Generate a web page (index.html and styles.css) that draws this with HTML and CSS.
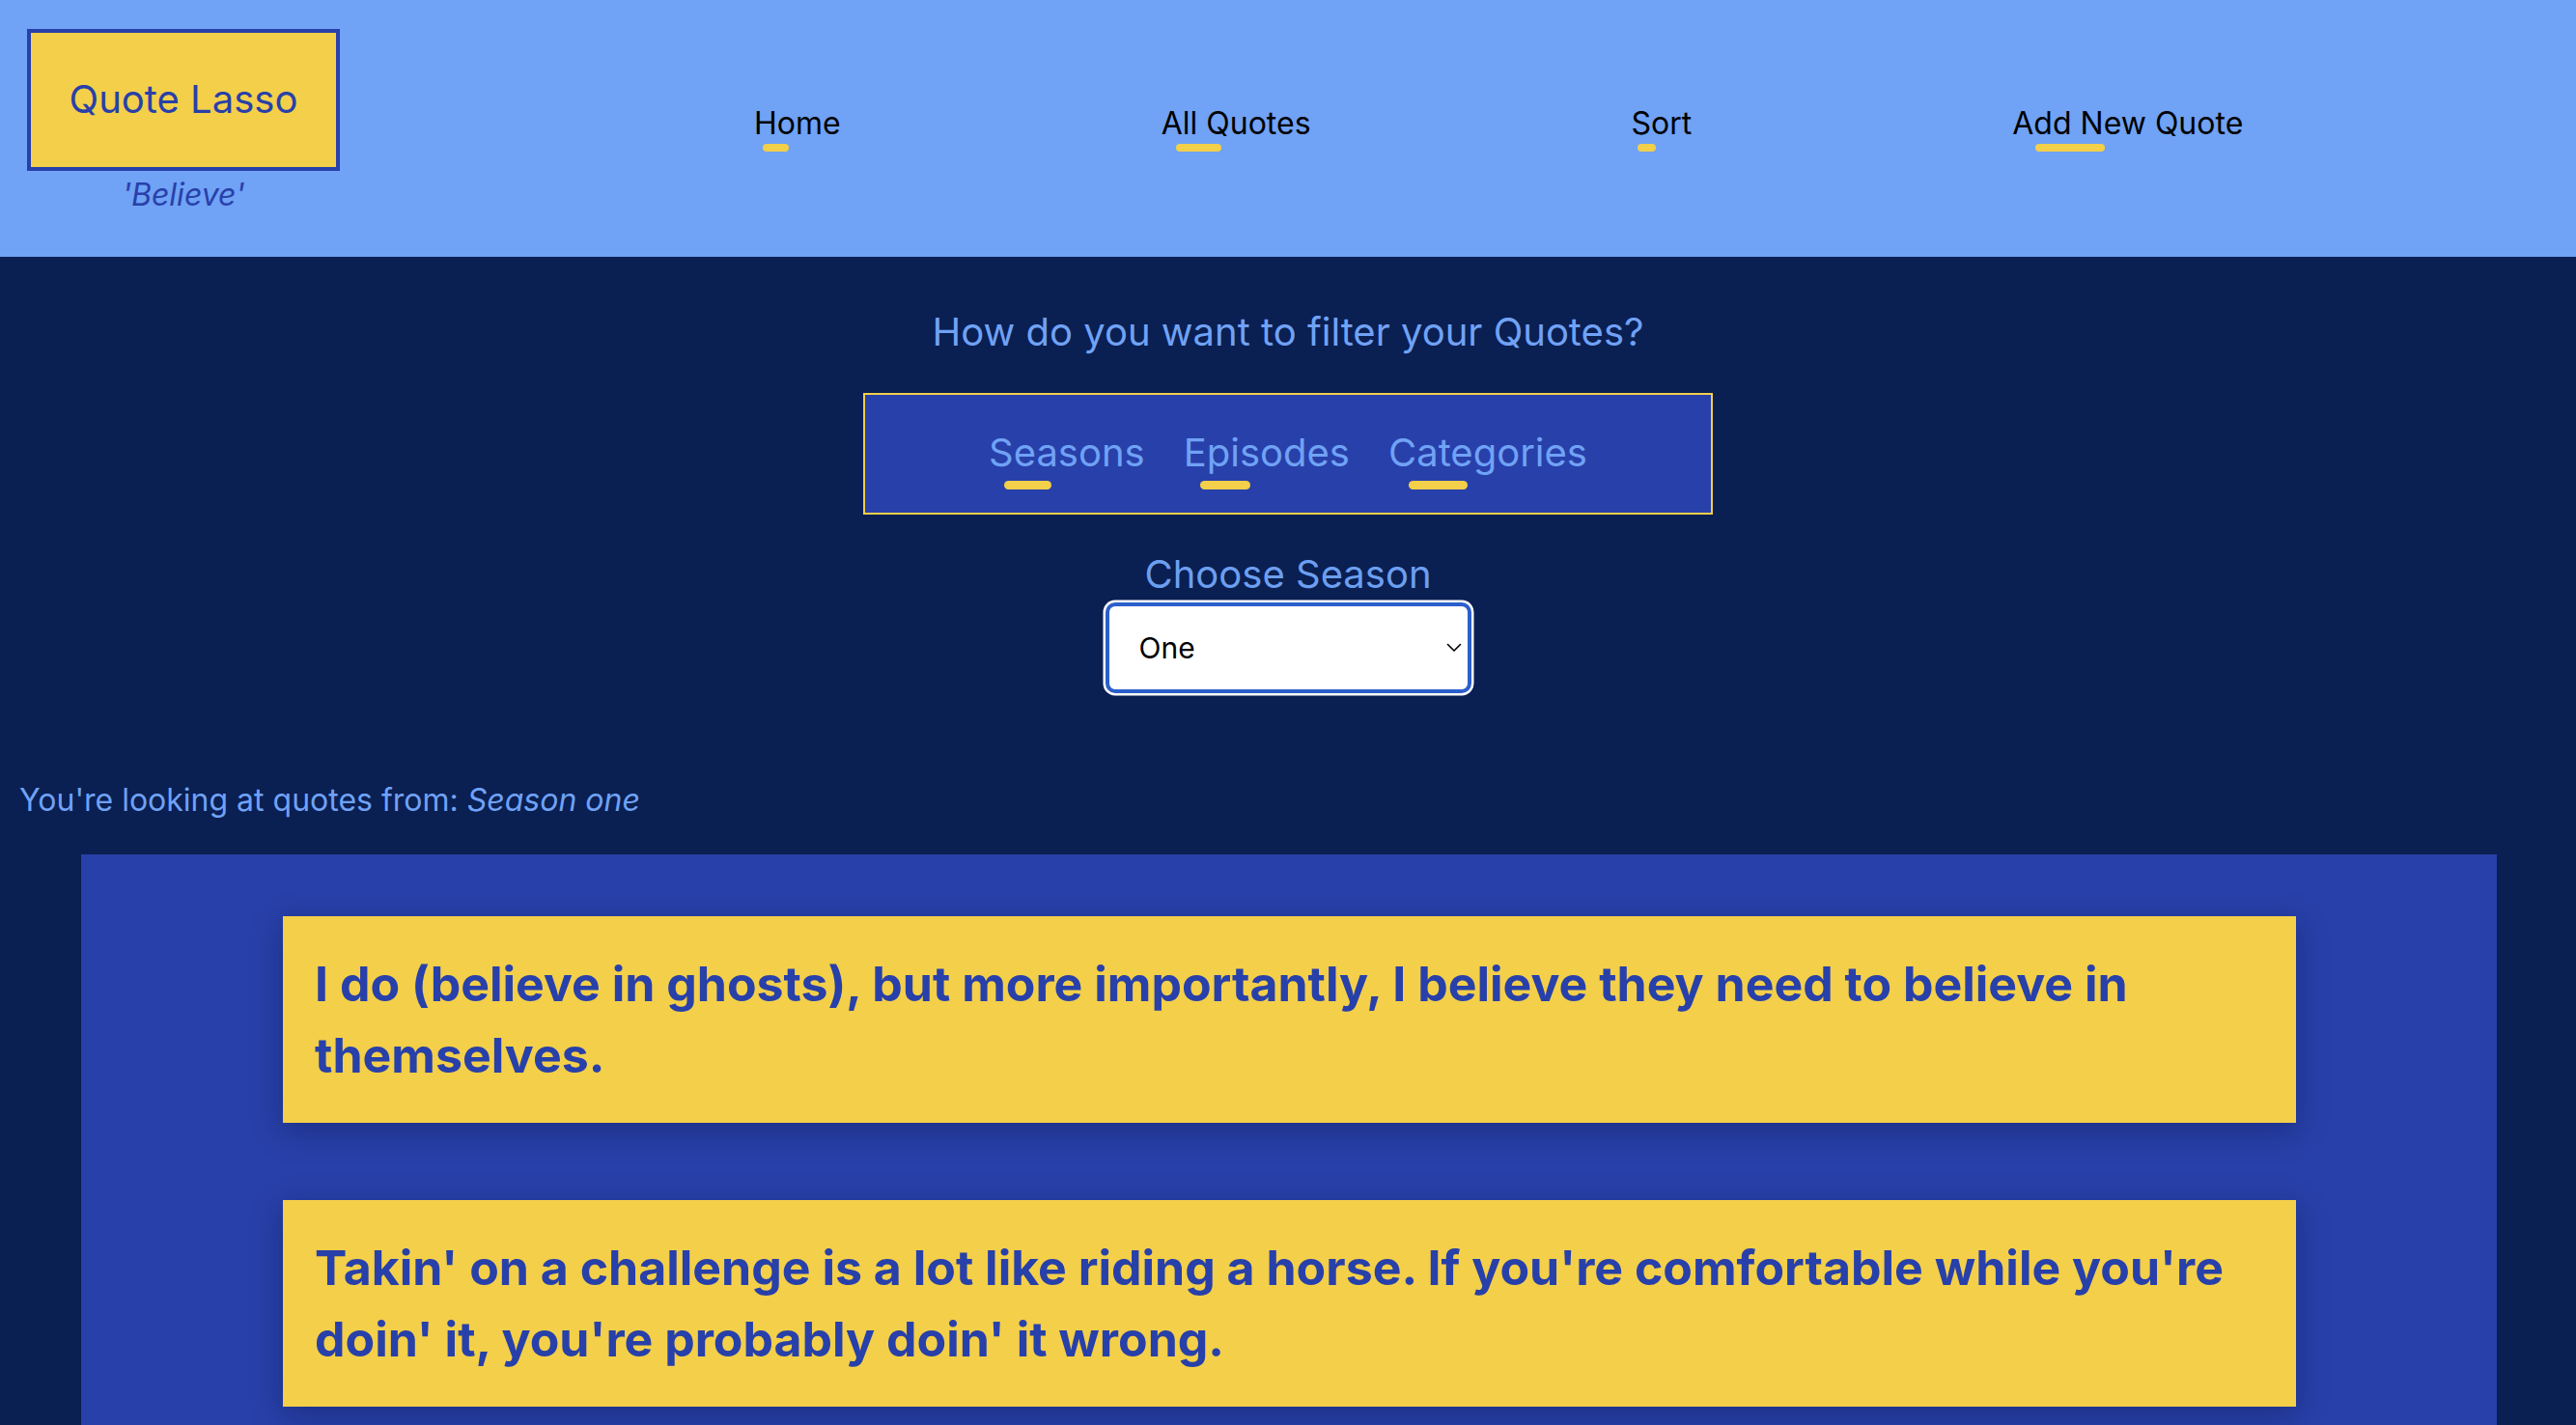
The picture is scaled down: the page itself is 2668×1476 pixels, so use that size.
FILE: index.html
```html
<!DOCTYPE html>
<html lang="en">
<head>
<meta charset="utf-8">
<title>Quote Lasso</title>
<link rel="stylesheet" href="styles.css">
</head>
<body>
<header class="header">
  <div class="brand">
    <div class="logo">Quote Lasso</div>
    <div class="motto">'Believe'</div>
  </div>
  <nav class="nav">
    <a class="nav-link" href="#">Home</a>
    <a class="nav-link" href="#">All Quotes</a>
    <a class="nav-link" href="#">Sort</a>
    <a class="nav-link" href="#">Add New Quote</a>
  </nav>
</header>
<main class="main">
  <h2 class="filter-title">How do you want to filter your Quotes?</h2>
  <div class="filter-box">
    <a class="filter-link" href="#">Seasons</a>
    <a class="filter-link" href="#">Episodes</a>
    <a class="filter-link" href="#">Categories</a>
  </div>
  <div class="chooser">
    <label class="chooser-label" for="season">Choose Season</label>
    <div class="select-wrap">
      <select id="season" class="select">
        <option>One</option>
        <option>Two</option>
        <option>Three</option>
      </select>
      <svg class="chevron" width="16" height="10" viewBox="0 0 16 10"><path d="M1.5 1.5 L8 8 L14.5 1.5" fill="none" stroke="#000" stroke-width="1.6" stroke-linecap="round" stroke-linejoin="round"/></svg>
    </div>
  </div>
  <p class="looking">You're looking at quotes from: <em>Season one</em></p>
  <section class="quotes">
    <div class="quote-card">I do (believe in ghosts), but more importantly, I believe they need to believe in themselves.</div>
    <div class="quote-card">Takin' on a challenge is a lot like riding a horse. If you're comfortable while you're doin' it, you're probably doin' it wrong.</div>
  </section>
</main>
</body>
</html>
```
FILE: styles.css
```css
* { box-sizing: border-box; }
html, body { margin: 0; padding: 0; }
body {
  font-family: Inter, "Noto Sans", "Liberation Sans", sans-serif;
  background: #0a1f52;
  min-height: 1476px;
}
.header {
  background: #70a2f5;
  height: 266px;
  display: flex;
  align-items: flex-start;
  padding: 30px 0 0 28px;
}
.brand {
  display: flex;
  flex-direction: column;
  align-items: center;
  width: 324px;
}
.logo {
  width: 324px;
  background: #f3cf4a;
  border: 4px solid #2840a9;
  color: #2840a9;
  font-size: 40px;
  line-height: 48px;
  padding: 45px 0 46px;
  text-align: center;
}
.motto {
  margin-top: 5px;
  font-size: 32px;
  line-height: 39px;
  font-style: italic;
  color: #2840a9;
}
.nav {
  display: flex;
  gap: 332px;
  margin-left: 429px;
  margin-top: 78px;
}
.nav-link, .filter-link {
  display: flex;
  flex-direction: column;
  text-decoration: none;
}
.nav-link {
  color: #000;
  font-size: 32px;
  line-height: 39px;
}
.nav-link::after, .filter-link::after {
  content: "";
  display: block;
  width: 30%;
  margin-left: 10%;
  background: #f3cf4a;
  border-radius: 5px;
}
.nav-link::after { height: 8px; margin-top: 2px; }
.main {
  display: flex;
  flex-direction: column;
  align-items: center;
}
.filter-title {
  margin: 54px 0 0;
  font-size: 40px;
  line-height: 48px;
  font-weight: 400;
  color: #70a2f5;
}
.filter-box {
  margin-top: 39px;
  width: 880px;
  height: 126px;
  background: #2840a9;
  border: 2px solid #f3cf4a;
  display: flex;
  justify-content: center;
  gap: 40px;
  padding-top: 36px;
}
.filter-link {
  color: #70a2f5;
  font-size: 40px;
  line-height: 48px;
}
.filter-link::after { height: 9px; margin-top: 5px; }
.chooser {
  margin-top: 38px;
  display: flex;
  flex-direction: column;
  align-items: center;
}
.chooser-label {
  font-size: 40px;
  line-height: 48px;
  color: #6c9ff0;
}
.select-wrap {
  position: relative;
  margin-top: 5px;
}
.select {
  appearance: none;
  -webkit-appearance: none;
  width: 379px;
  height: 94px;
  border: 4px solid #2b5fcb;
  border-radius: 10px;
  box-shadow: 0 0 0 2.5px #fff;
  background: #fff;
  color: #000;
  font-family: Inter, "Noto Sans", sans-serif;
  font-size: 30px;
  padding: 0 0 0 31px;
  outline: none;
}
.chevron {
  position: absolute;
  right: 10px;
  top: 42px;
  pointer-events: none;
}
.looking {
  align-self: flex-start;
  margin: 91px 0 0 20px;
  font-size: 32px;
  line-height: 39px;
  color: #70a2f5;
}
.looking em { font-style: italic; }
.quotes {
  align-self: stretch;
  margin: 37px 82px 0 84px;
  background: #2840a9;
  padding: 64px 0 120px;
  display: flex;
  flex-direction: column;
  gap: 80px;
}
.quote-card {
  margin: 0 208px 0 209px;
  background: #f3cf4a;
  color: #2840a9;
  font-weight: 700;
  font-size: 50px;
  line-height: 74px;
  padding: 33px;
  box-shadow: 0 8px 30px rgba(8, 18, 60, 0.35);
}
```
